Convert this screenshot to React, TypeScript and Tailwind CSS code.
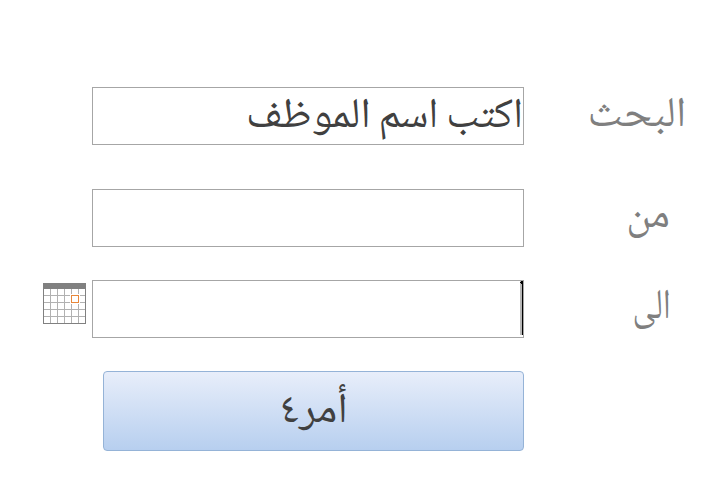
import React from 'react';

interface FieldRowProps {
  label: string;
  labelClass: string;
  className?: string;
  icon?: React.ReactNode;
  children?: React.ReactNode;
}

const CalendarIcon: React.FC = () => (
  <svg width="43" height="41" viewBox="0 0 43 41">
    <rect width="43" height="41" fill="#fff" />
    <path
      d="M7.5 6v34M14.5 6v34M21.5 6v34M28.5 6v34M35.5 6v34M1 12.5h41M1 19.5h41M1 26.5h41M1 33.5h41"
      stroke="#b1b1b1"
      fill="none"
    />
    <rect x="0.5" y="0.5" width="42" height="40" stroke="#808080" fill="none" />
    <rect width="43" height="6" fill="#808080" />
    <rect x="27" y="11" width="10" height="10" fill="#fff" />
    <rect x="28" y="12" width="8" height="8" fill="#e8873a" />
    <rect x="29" y="13" width="6" height="6" fill="#fff" />
  </svg>
);

const Caret: React.FC = () => (
  <svg width="3" height="54" viewBox="0 0 3 54">
    <rect width="2" height="54" fill="#b8b8b8" />
    <rect x="2" width="1" height="54" fill="#000" />
    <rect x="1" width="2" height="3" fill="#000" />
    <rect y="1" width="1" height="1" fill="#000" />
  </svg>
);

const FieldRow: React.FC<FieldRowProps> = ({ label, labelClass, className = '', icon, children }) => (
  <div className={`flex h-[58px] ${className}`}>
    <label className={`w-[190px] shrink-0 text-[#7f7f7f] leading-[58px] whitespace-nowrap ${labelClass}`}>
      <span className="inline-block origin-right">{label}</span>
    </label>
    <div className="flex h-[58px] w-[432px] shrink-0 justify-start border border-[#a6a6a6] bg-white text-[#404040] leading-[60px] whitespace-nowrap [word-spacing:-1.5px]">
      {children}
    </div>
    {icon && <div className="mt-[3px] mr-1.5">{icon}</div>}
  </div>
);

const App: React.FC = () => (
  <div
    dir="rtl"
    className="h-[502px] w-[714px] overflow-hidden bg-white pt-[87px] font-['Noto_Naskh_Arabic','Noto_Sans',serif] text-[42px]"
  >
    <FieldRow label="البحث" labelClass="pr-7 pt-px [&>span]:scale-x-[1.06]">
      <p>
        اكتب اسم <span className="inline-block origin-right scale-x-[1.06]">الموظف</span>
      </p>
    </FieldRow>
    <FieldRow label="من" labelClass="pr-[44px]" className="mt-11" />
    <FieldRow
      label="الى"
      labelClass="pr-[43px] [&>span]:scale-x-[0.8]"
      className="mt-[33px]"
      icon={<CalendarIcon />}
    >
      <Caret />
    </FieldRow>
    <button
      type="button"
      className="mt-[33px] mr-[190px] block h-20 w-[421px] rounded-[4px] border border-[#95b3d7] bg-linear-to-b from-[#e8eefa] to-[#b7cfef] pt-1 text-center text-[#404040] leading-[74px]"
    >
      <span className="inline-block scale-x-[1.06]">أمر٤</span>
    </button>
  </div>
);

export default App;
